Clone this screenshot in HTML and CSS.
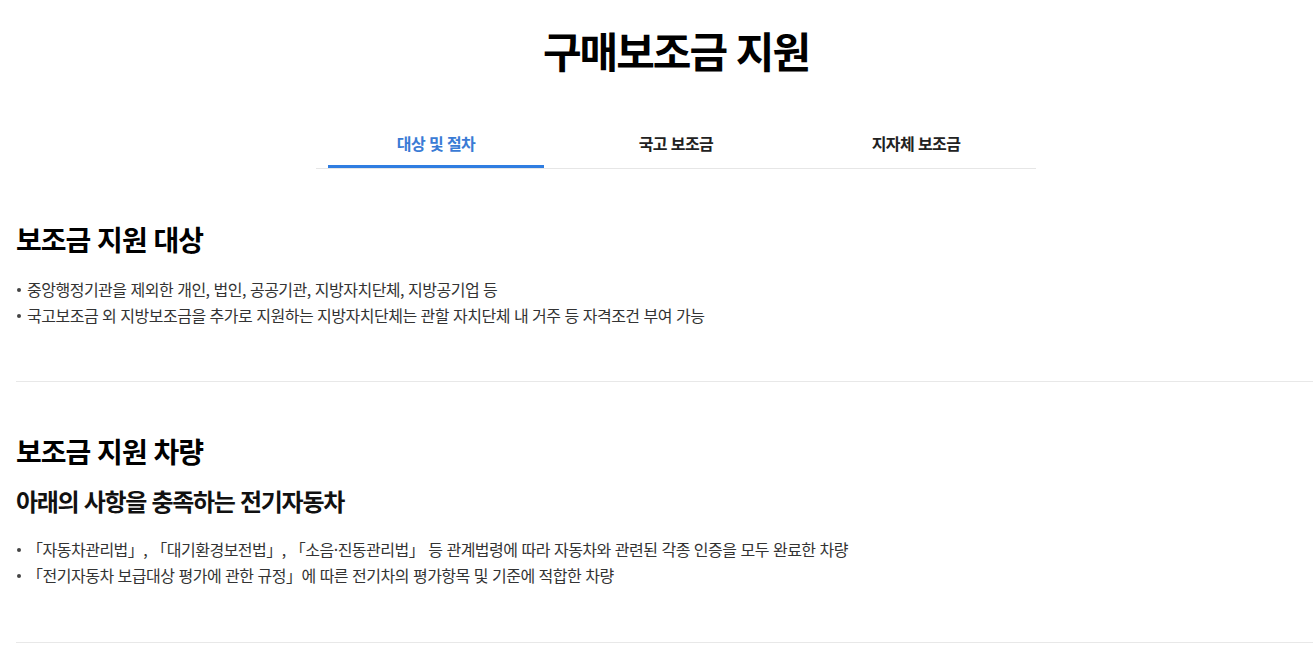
FILE: index.html
```html
<!DOCTYPE html>
<html lang="ko">
<head>
<meta charset="utf-8">
<title>구매보조금 지원</title>
<link rel="stylesheet" href="styles.css">
</head>
<body>
<div class="page">
  <h1 class="page-title">구매보조금 지원</h1>
  <nav class="tabs">
    <a class="tab is-active">대상 및 절차</a>
    <a class="tab">국고 보조금</a>
    <a class="tab">지자체 보조금</a>
  </nav>

  <section class="section section-first">
    <h2 class="section-title">보조금 지원 대상</h2>
    <ul class="bullets">
      <li>중앙행정기관을 제외한 개인, 법인, 공공기관, 지방자치단체, 지방공기업 등</li>
      <li>국고보조금 외 지방보조금을 추가로 지원하는 지방자치단체는 관할 자치단체 내 거주 등 자격조건 부여 가능</li>
    </ul>
  </section>

  <section class="section section-second">
    <h2 class="section-title">보조금 지원 차량</h2>
    <h3 class="sub-title">아래의 사항을 충족하는 전기자동차</h3>
    <ul class="bullets bullets-tight">
      <li>「자동차관리법」, 「대기환경보전법」, 「소음·진동관리법」 등 관계법령에 따라 자동차와 관련된 각종 인증을 모두 완료한 차량</li>
      <li>「전기자동차 보급대상 평가에 관한 규정」에 따른 전기차의 평가항목 및 기준에 적합한 차량</li>
    </ul>
  </section>
</div>
</body>
</html>
```

FILE: styles.css
```css
html, body {
  margin: 0;
  padding: 0;
  background: #fff;
  overflow: hidden;
}
body {
  font-family: "Noto Sans CJK KR", "Noto Sans", sans-serif;
  color: #111;
}
.page {
  width: 1320px;
  margin-left: 16px;
}
.page-title {
  margin: 0;
  padding-top: 22px;
  text-align: center;
  font-size: 42px;
  line-height: 56px;
  font-weight: 700;
  letter-spacing: -2px;
  color: #000;
}
.tabs {
  display: flex;
  width: 720px;
  margin: 46px auto 0;
  border-bottom: 1px solid #e6e6e6;
}
.tab {
  position: relative;
  flex: 1;
  text-align: center;
  font-size: 16px;
  font-weight: 700;
  letter-spacing: -0.6px;
  line-height: 22px;
  padding: 8px 0 14px;
  color: #222;
}
.tab.is-active {
  color: #3a7bd5;
}
.tab.is-active::after {
  content: "";
  position: absolute;
  left: 12px;
  right: 12px;
  bottom: 0;
  height: 3px;
  background: #2f7de1;
}
.section {
  border-bottom: 1px solid #e8e8e8;
}
.section-first {
  padding: 50px 0 53px;
}
.section-second {
  padding: 49px 0 54px;
}
.section-title {
  margin: 0;
  font-size: 28px;
  line-height: 40px;
  font-weight: 700;
  letter-spacing: -1px;
  color: #000;
}
.sub-title {
  margin: 14px 0 0;
  font-size: 24px;
  line-height: 32px;
  font-weight: 700;
  letter-spacing: -1.3px;
  color: #111;
}
.bullets {
  list-style: none;
  margin: 17px 0 0;
  padding: 0;
}
.bullets-tight {
  margin-top: 19px;
}
.bullets li {
  position: relative;
  padding-left: 11px;
  font-size: 16px;
  line-height: 26px;
  letter-spacing: -0.5px;
  color: #333;
}
.bullets li::before {
  content: "";
  position: absolute;
  left: 1px;
  top: 12px;
  width: 4px;
  height: 4px;
  border-radius: 50%;
  background: #444;
}
```
